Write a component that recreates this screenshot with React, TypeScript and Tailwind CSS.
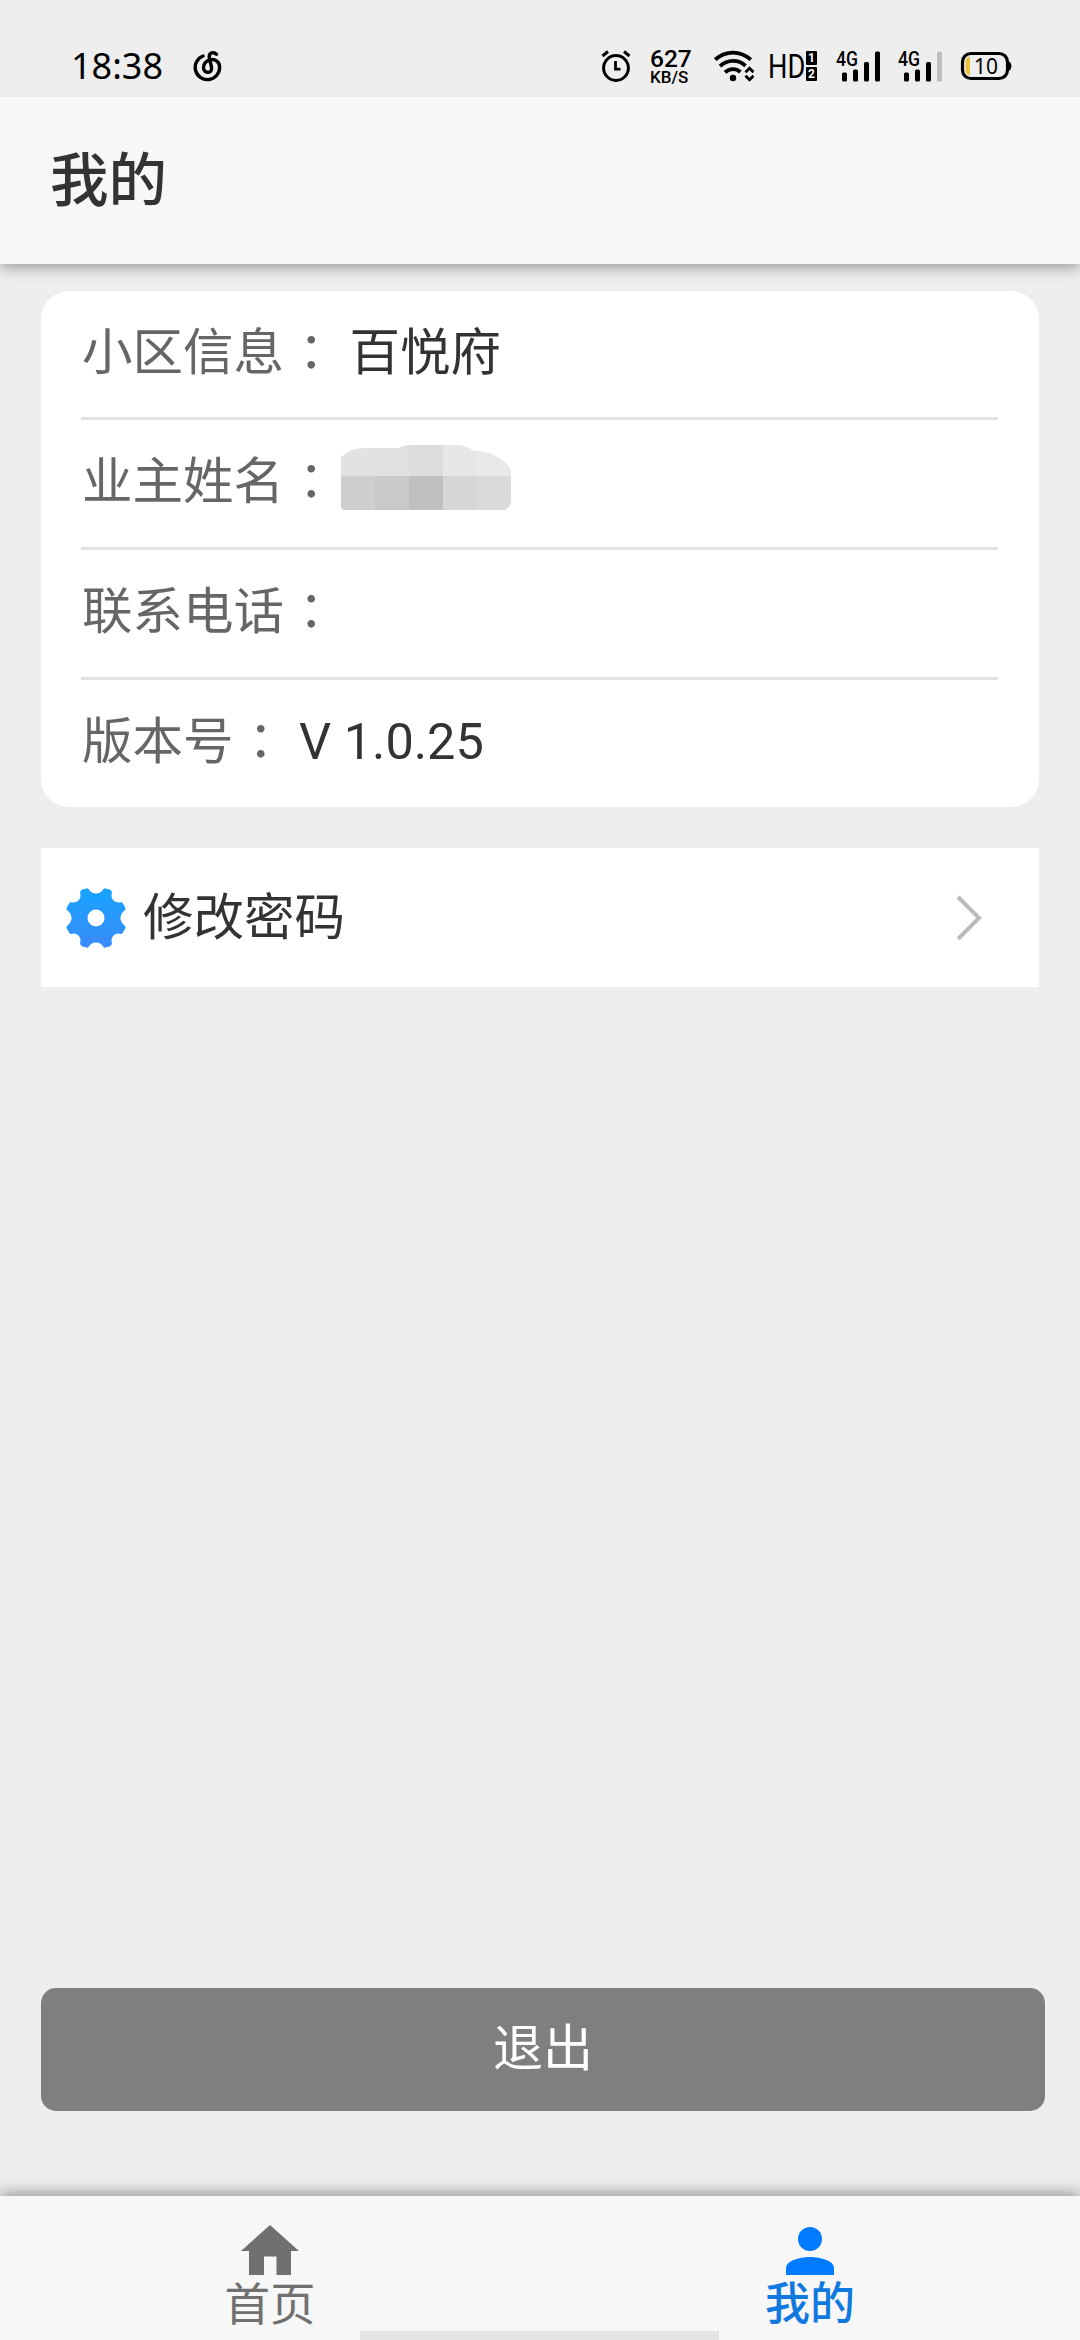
import * as React from "react";

interface InfoRow {
  label: string;
  value?: string;
  masked?: boolean;
}

const infoRows: InfoRow[] = [
  { label: "小区信息", value: "百悦府" },
  { label: "业主姓名", masked: true },
  { label: "联系电话" },
  { label: "版本号", value: "V 1.0.25" },
];

function MusicIcon() {
  return (
    <svg width="30" height="34" viewBox="0 0 30 34" fill="none" stroke="#000" strokeWidth="3.4" strokeLinecap="round">
      <path d="M10 6A12.2 12.2 0 1 0 26.6 17C26.6 11.5 22 9.2 18.500 9.6C13 10 10.500 14 10.500 17.500C10.500 23.500 18.600 24 18.600 18.500C18.600 15 16.200 10 16.200 7C16.200 2.500 20.500 1.500 23.500 4.200" />
    </svg>
  );
}

function AlarmIcon() {
  return (
    <svg width="30" height="32" viewBox="0 0 30 32" fill="none" stroke="#000">
      <circle cx="15" cy="18" r="12.4" strokeWidth="3" />
      <path d="M14.5 11V19.2H19.5" strokeWidth="2.8" />
      <path d="M1.5 6L7 1.5M28.5 6L23 1.5" strokeWidth="3" />
    </svg>
  );
}

function WifiIcon() {
  return (
    <svg width="40" height="32" viewBox="0 0 40 32" fill="none" stroke="#000" strokeWidth="3.8">
      <path d="M1.2 9.6C11.5 .2 26.5 .2 36.8 9.6" />
      <path d="M6 16.2C13.5 9.2 24.5 9.2 31.5 15.8" />
      <path d="M11 22.4C15.6 18 22 18 26.4 22" />
      <circle cx="19" cy="28" r="3.2" fill="#000" stroke="none" />
      <path d="M31.5 22.2L35.5 18.2L39.5 22.2M31.5 25.8L35.5 29.8L39.5 25.8" strokeWidth="2.8" />
    </svg>
  );
}

function Signal({ weak = false }: { weak?: boolean }) {
  return (
    <div className="relative h-[32px] w-[46px]">
      <span className="absolute left-0 top-0 origin-left scale-x-[0.88] font-[Roboto] text-[20px] font-medium leading-[19px]">
        4G
      </span>
      <svg width="46" height="32" viewBox="0 0 46 32">
        <rect x="6" y="22.5" width="5" height="9" rx="1.5" />
        <rect x="17" y="19.5" width="5" height="12" rx="1.5" />
        <rect x="28" y="12" width="5" height="19.5" rx="1.5" />
        <rect x="39" y="1.5" width="5" height="30" rx="1.5" fill={weak ? "#bdbdbd" : "#000"} />
      </svg>
    </div>
  );
}

function Battery() {
  return (
    <div className="relative h-[30px] w-[52px]">
      <svg width="52" height="30" viewBox="0 0 52 30">
        <path d="M47 10C50 10 51.4 12 51.4 15S50 20 47 20Z" />
        <rect x="2.5" y="2.5" width="45" height="25" rx="8.5" fill="none" stroke="#000" strokeWidth="3.2" />
        <path d="M10 6V24C7 24 5.6 22 5.6 19V11C5.6 8 7 6 10 6Z" fill="#e8c33c" />
      </svg>
      <span className="absolute left-[14px] top-0 font-['Noto_Sans'] text-[21px] leading-[30px]">10</span>
    </div>
  );
}

function StatusBar() {
  return (
    <div className="flex h-[97px] items-start bg-[#eeeeee] pt-[50px] text-black">
      <span className="ml-[71px] w-[122px] font-['Noto_Sans'] text-[36px] leading-[32px]">18:38</span>
      <MusicIcon />
      <div className="ml-[378px]">
        <AlarmIcon />
      </div>
      <div className="ml-[19px] flex w-[43px] flex-col font-[Roboto] font-medium">
        <span className="text-[24.5px] leading-[17px]">627</span>
        <span className="mt-[3px] text-[17px] leading-[15px]">KB/S</span>
      </div>
      <div className="ml-[21px]">
        <WifiIcon />
      </div>
      <div className="ml-[14px] flex w-[52px]">
        <span className="w-[38px] origin-left scale-x-[0.8] font-[Roboto] text-[34px] leading-[33px]">HD</span>
        <div className="flex flex-col gap-[2px] pt-[1px] text-center font-[Roboto] text-[12px] font-bold leading-[14px] text-white">
          <span className="w-[11px] rounded-[1px] bg-black">1</span>
          <span className="w-[11px] rounded-[1px] bg-black">2</span>
        </div>
      </div>
      <div className="ml-[16px]">
        <Signal />
      </div>
      <div className="ml-[16px]">
        <Signal weak />
      </div>
      <div className="ml-[16px] pt-[1px]">
        <Battery />
      </div>
    </div>
  );
}

// Pixelated block covering the owner's name
function MaskedName() {
  const top = ["#e2e2e2", "#e0e0e0", "#dddddd", "#e7e7e7", "#e9e9e9"];
  const bottom = ["#cecece", "#c9c9c9", "#c0c0c0", "#d6d6d6", "#dadada"];
  return (
    <svg width="170" height="65" viewBox="0 0 170 65">
      <clipPath id="mask">
        <path d="M0 12Q10 3 23 3H58Q63 0 70 0H116Q123 0 134 6Q156 6 170 24V58Q168 63 164 65H4Q0 65 0 61Z" />
      </clipPath>
      <g clipPath="url(#mask)">
        {top.map((color, i) => (
          <rect key={`t${i}`} x={i * 34} y="0" width="34" height="31" fill={color} />
        ))}
        {bottom.map((color, i) => (
          <rect key={`b${i}`} x={i * 34} y="31" width="34" height="34" fill={color} />
        ))}
      </g>
    </svg>
  );
}

function GearIcon() {
  return (
    <svg width="60" height="60" viewBox="0 0 60 60">
      <defs>
        <linearGradient id="gear" x1="0" y1="0" x2="0" y2="1">
          <stop offset="0" stopColor="#16a4ff" />
          <stop offset="1" stopColor="#3b8bfb" />
        </linearGradient>
      </defs>
      <path
        fill="url(#gear)"
        fillRule="evenodd"
        d="M16 1.5L22 .3Q25 5.5 30 5.5T38 .3L44 1.5L46 4Q44.500 9.500 47.500 12.500T56 14L59.500 20Q60 22 58 23Q54.500 26 54.500 30T58 37Q60 38 59.500 40L56 46Q50.500 44.500 47.500 47.500T46 56L44 58.500L38 59.700Q35 54.500 30 54.500T22 59.700L16 58.500L14 56Q15.500 50.500 12.500 47.500T4 46L.5 40Q0 38 2 37Q5.500 34 5.500 30T2 23Q0 22 .5 20L4 14Q9.500 15.500 12.500 12.500T14 4ZM30 21.500A8.500 8.500 0 1 0 30 38.500A8.500 8.500 0 1 0 30 21.500Z"
      />
    </svg>
  );
}

export default function App() {
  return (
    <div className="flex h-[2340px] w-[1080px] flex-col overflow-hidden bg-[#eeeeee] font-['Noto_Sans_CJK_SC',sans-serif] text-[#333333]">
      <StatusBar />

      {/* Header */}
      <header className="flex h-[167px] shrink-0 items-center bg-[#f7f7f7] pb-[10px] pl-[50px] shadow-[0_3px_14px_rgba(0,0,0,0.38)] [clip-path:inset(0_0_-30px_0)]">
        <h1 className="text-[58.5px] font-medium leading-[70px]">我的</h1>
      </header>

      <main className="flex flex-1 flex-col px-[41px] pt-[27px]">
        {/* Info card */}
        <div className="flex h-[516px] flex-col rounded-[28px] bg-white pr-[41px] pl-[40px]">
          {infoRows.map((row, i) => (
            <div
              key={row.label}
              className={
                i < infoRows.length - 1
                  ? "flex h-[130px] items-center border-b-[3px] border-[#e2e2e2] pb-[7px] first:h-[129px]"
                  : "flex h-[127px] items-center pb-[7px]"
              }
            >
              <div className="flex h-[66px] items-baseline pl-px text-[50.5px] leading-[60px]">
                <span className="text-[#666666]">{row.label}</span>
                <span className="relative left-[2px] top-px font-['Noto_Sans_CJK_TC'] text-[#666666]">：</span>
                {row.value && (
                  <span className="ml-[15px] font-[Roboto,'Noto_Sans_CJK_SC',sans-serif]">{row.value}</span>
                )}
                {row.masked && (
                  <span className="-mt-[6px] ml-[6px] self-center">
                    <MaskedName />
                  </span>
                )}
              </div>
            </div>
          ))}
        </div>

        {/* Change password */}
        <button type="button" className="mt-[41px] flex h-[139px] items-center bg-white pl-[25px] pr-[57px]">
          <GearIcon />
          <span className="ml-[17px] pb-[9px] text-[50.5px] leading-[60px]">修改密码</span>
          <svg className="ml-auto" width="26" height="46" viewBox="0 0 26 46" fill="none" stroke="#bbbbbb" strokeWidth="4">
            <path d="M2 2L23 23L2 44" />
          </svg>
        </button>

        {/* Logout */}
        <button
          type="button"
          className="mt-auto -mr-[6px] mb-[85px] flex h-[123px] items-center justify-center rounded-[15px] bg-[#7f7f7f] pb-[11px] text-[50px] leading-[60px] text-white"
        >
          退出
        </button>
      </main>

      {/* Tab bar */}
      <nav className="relative flex h-[144px] shrink-0 bg-[#f7f7f7] shadow-[0_-3px_14px_rgba(0,0,0,0.38)] [clip-path:inset(-30px_0_0_0)]">
        <div className="flex flex-1 flex-col items-center pt-[29px] text-[#707070]">
          <svg width="58" height="50" viewBox="0 0 58 50" fill="currentColor">
            <path d="M29 0L58 26H50V50H35.500V31.500H23V50H8V26H0Z" />
          </svg>
          <span className="text-[45.5px] leading-[52px]">首页</span>
        </div>
        <div className="flex flex-1 flex-col items-center pt-[29px] text-[#007aff]">
          <svg width="48" height="50" viewBox="0 0 48 50" fill="currentColor">
            <circle cx="24" cy="14" r="12" />
            <path d="M0 50V43C0 36 13 32 24 32S48 36 48 43V50Z" />
          </svg>
          <span className="text-[45px] font-medium leading-[52px] text-[#1079e0]">我的</span>
        </div>
        <div className="absolute bottom-0 left-[360px] h-[9px] w-[359px] bg-[#e4e4e4]" />
      </nav>
    </div>
  );
}
